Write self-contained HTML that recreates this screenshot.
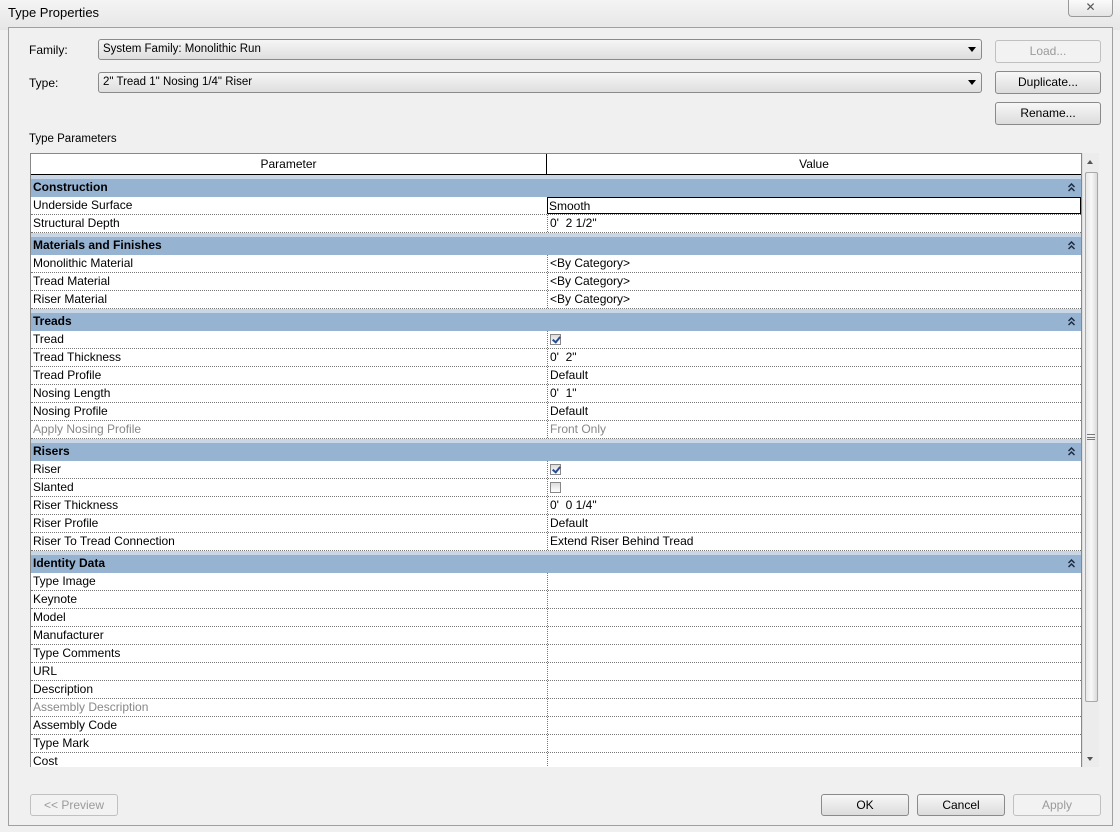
<!DOCTYPE html>
<html><head><style>
*{box-sizing:border-box;margin:0;padding:0}
body{width:1120px;height:832px;overflow:hidden;background:#f0f0f0;font-family:"Liberation Sans",Tahoma,sans-serif;font-size:12px;color:#000;position:relative}
.abs{position:absolute}
.title{left:0;top:0;width:1120px;height:30px;background:linear-gradient(#f4f4f4,#e6e6e6);}
.title span{position:absolute;left:8px;top:5px;font-size:13px}
.close{left:1068px;top:0;width:45px;height:17px;border:1px solid #999;border-top:none;border-radius:0 0 4px 4px;background:linear-gradient(#fbfbfb,#e4e4e4);text-align:center;font-size:12px;line-height:15px;color:#555}
.panel{left:8px;top:27px;width:1105px;height:799px;border:1px solid #a0a0a0;background:#f0f0f0}
.lbl{font-size:12px}
.combo{height:21px;border:1px solid #8a8a8a;border-radius:3px;background:linear-gradient(#f6f6f6,#dedede);padding:3px 4px;font-size:11.5px}
.combo i{position:absolute;right:5px;top:7px;width:0;height:0;border-left:4px solid transparent;border-right:4px solid transparent;border-top:5px solid #000}
.btn{height:23px;border:1px solid #8a8a8a;border-radius:3px;background:linear-gradient(#f7f7f7,#dcdcdc);text-align:center;line-height:21px;font-size:12px}
.dis{color:#9a9a9a;border-color:#c0c0c0;background:#f2f2f2}
.table{left:30px;top:153px;width:1052px;height:614px;border:1px solid #888;border-bottom:none;background:#fff;overflow:hidden}
.hdr{height:21px;border-bottom:1px solid #000;display:flex;background:#fff}
.hdr div{text-align:center;line-height:20px}
.hdr div:first-child{width:516px;border-right:1px solid #000}
.hdr div:last-child{flex:1}
.gap{height:4px;background:#c8d6e5}
.grp{height:18px;background:#97b3d2;font-weight:bold;padding-left:2px;line-height:17px;position:relative}
.grp svg{position:absolute;right:6px;top:4px}
.row{height:18px;display:flex;border-bottom:1px dotted #777;line-height:17px}
.row div:first-child{width:516px;padding-left:2px}
.row div:last-child{flex:1;border-left:1px dotted #777;padding-left:2px}
.g{color:#888}
.cb{display:inline-block;width:11px;height:11px;border:1px solid #888;background:linear-gradient(#ddd,#fff);margin-top:3px;position:relative;vertical-align:top}
.cb.on:after{content:"";position:absolute;left:3px;top:0px;width:3px;height:6px;border:solid #2a4d8f;border-width:0 2px 2px 0;transform:rotate(40deg)}
.sb{left:1082px;top:153px;width:17px;height:614px;background:#ececec;border-left:1px solid #ddd}
.thumb{left:1085px;top:172px;width:13px;height:530px;border:1px solid #a8a8a8;border-radius:2px;background:linear-gradient(90deg,#e8e8e8,#f8f8f8,#dadada)}
</style></head><body>
<svg width="0" height="0" style="position:absolute"><defs><symbol id="chev" viewBox="0 0 7 9"><path d="M0.5 4L3.5 1L6.5 4M0.5 8L3.5 5L6.5 8" fill="none" stroke="#1a2a40" stroke-width="1.5"/></symbol></defs></svg>
<div class="abs title"><span>Type Properties</span></div>
<div class="abs close">✕</div>
<div class="abs panel"></div>
<div class="abs lbl" style="left:29px;top:43px">Family:</div>
<div class="abs lbl" style="left:29px;top:76px">Type:</div>
<div class="abs combo" style="left:98px;top:39px;width:884px">System Family: Monolithic Run<i></i></div>
<div class="abs combo" style="left:98px;top:72px;width:884px">2" Tread 1" Nosing 1/4" Riser<i></i></div>
<div class="abs btn dis" style="left:995px;top:40px;width:106px">Load...</div>
<div class="abs btn" style="left:995px;top:71px;width:106px">Duplicate...</div>
<div class="abs btn" style="left:995px;top:102px;width:106px">Rename...</div>
<div class="abs lbl" style="left:29px;top:133px;font-size:11.5px">Type Parameters</div>
<div class="abs table">
<div class="hdr"><div>Parameter</div><div>Value</div></div>
<div class="gap"></div>
<div class="grp">Construction<svg width="7" height="9"><use href="#chev"/></svg></div>
<div class="row"><div>Underside Surface</div><div style="border:1px solid #000;padding-left:1px">Smooth</div></div>
<div class="row"><div>Structural Depth</div><div>0'&nbsp; 2 1/2"</div></div>
<div class="gap"></div>
<div class="grp">Materials and Finishes<svg width="7" height="9"><use href="#chev"/></svg></div>
<div class="row"><div>Monolithic Material</div><div>&lt;By Category&gt;</div></div>
<div class="row"><div>Tread Material</div><div>&lt;By Category&gt;</div></div>
<div class="row"><div>Riser Material</div><div>&lt;By Category&gt;</div></div>
<div class="gap"></div>
<div class="grp">Treads<svg width="7" height="9"><use href="#chev"/></svg></div>
<div class="row"><div>Tread</div><div><span class="cb on"></span></div></div>
<div class="row"><div>Tread Thickness</div><div>0'&nbsp; 2"</div></div>
<div class="row"><div>Tread Profile</div><div>Default</div></div>
<div class="row"><div>Nosing Length</div><div>0'&nbsp; 1"</div></div>
<div class="row"><div>Nosing Profile</div><div>Default</div></div>
<div class="row g"><div>Apply Nosing Profile</div><div>Front Only</div></div>
<div class="gap"></div>
<div class="grp">Risers<svg width="7" height="9"><use href="#chev"/></svg></div>
<div class="row"><div>Riser</div><div><span class="cb on"></span></div></div>
<div class="row"><div>Slanted</div><div><span class="cb"></span></div></div>
<div class="row"><div>Riser Thickness</div><div>0'&nbsp; 0 1/4"</div></div>
<div class="row"><div>Riser Profile</div><div>Default</div></div>
<div class="row"><div>Riser To Tread Connection</div><div>Extend Riser Behind Tread</div></div>
<div class="gap"></div>
<div class="grp">Identity Data<svg width="7" height="9"><use href="#chev"/></svg></div>
<div class="row"><div>Type Image</div><div></div></div>
<div class="row"><div>Keynote</div><div></div></div>
<div class="row"><div>Model</div><div></div></div>
<div class="row"><div>Manufacturer</div><div></div></div>
<div class="row"><div>Type Comments</div><div></div></div>
<div class="row"><div>URL</div><div></div></div>
<div class="row"><div>Description</div><div></div></div>
<div class="row g"><div>Assembly Description</div><div></div></div>
<div class="row"><div>Assembly Code</div><div></div></div>
<div class="row"><div>Type Mark</div><div></div></div>
<div class="row"><div>Cost</div><div></div></div>
</div>
<div class="abs sb"></div>
<div class="abs" style="left:1087px;top:160px;width:0;height:0;border-left:3px solid transparent;border-right:3px solid transparent;border-bottom:4px solid #555"></div>
<div class="abs thumb"></div>
<div class="abs" style="left:1087px;top:434px;width:8px;height:6px;border-top:1px solid #777;border-bottom:1px solid #777"><div style="margin-top:2px;height:1px;background:#777"></div></div>
<div class="abs" style="left:1087px;top:757px;width:0;height:0;border-left:3px solid transparent;border-right:3px solid transparent;border-top:4px solid #555"></div>
<div class="abs btn dis" style="left:30px;top:794px;width:88px;height:22px;line-height:20px">&lt;&lt; Preview</div>
<div class="abs btn" style="left:821px;top:794px;width:88px;height:22px;line-height:20px">OK</div>
<div class="abs btn" style="left:917px;top:794px;width:88px;height:22px;line-height:20px">Cancel</div>
<div class="abs btn dis" style="left:1013px;top:794px;width:88px;height:22px;line-height:20px">Apply</div>
</body></html>
